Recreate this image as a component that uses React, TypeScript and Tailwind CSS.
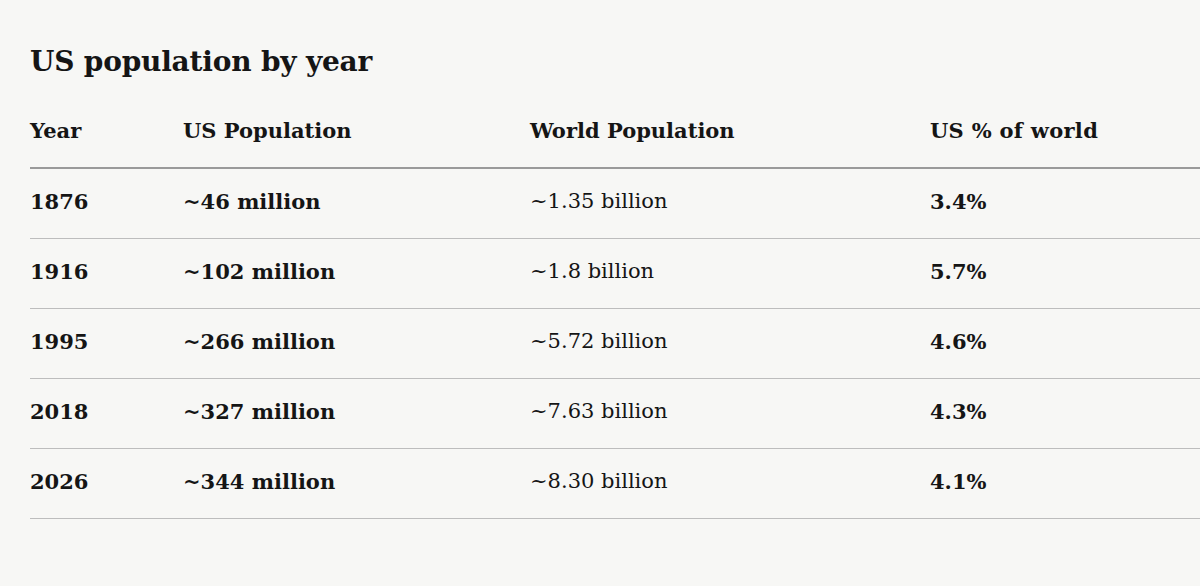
const rows = [
  { year: '1876', us: '~46 million', world: '~1.35 billion', pct: '3.4%' },
  { year: '1916', us: '~102 million', world: '~1.8 billion', pct: '5.7%' },
  { year: '1995', us: '~266 million', world: '~5.72 billion', pct: '4.6%' },
  { year: '2018', us: '~327 million', world: '~7.63 billion', pct: '4.3%' },
  { year: '2026', us: '~344 million', world: '~8.30 billion', pct: '4.1%' },
];

export default function App() {
  return (
    <div className="min-h-[586px] w-[1200px] overflow-hidden bg-[#f7f7f5] pl-[30px] pt-[42px] text-[#151515] font-['DejaVu_Serif',serif]">
      <h2 className="text-[28px] font-bold leading-[40px] tracking-[-0.2px]">US population by year</h2>
      <table className="mt-[10px] w-[1180px] border-collapse text-left text-[21px]">
        <thead>
          <tr className="h-[76px] border-b-2 border-[#9a9a9a]">
            <th className="w-[153px] p-0 pt-[2px] font-bold">Year</th>
            <th className="w-[347px] p-0 pt-[2px] font-bold">US Population</th>
            <th className="w-[400px] p-0 pt-[2px] font-bold">World Population</th>
            <th className="p-0 pt-[2px] font-bold tracking-[0.3px]">US % of world</th>
          </tr>
        </thead>
        <tbody>
          {rows.map(r => (
            <tr key={r.year} className="h-[70px] border-b-[1.5px] border-[#bdbdbd]">
              <td className="p-0 pb-[3px] font-bold">{r.year}</td>
              <td className="p-0 pb-[3px] font-bold">{r.us}</td>
              <td className="p-0 pb-[3px]">{r.world}</td>
              <td className="p-0 pb-[3px] font-bold">{r.pct}</td>
            </tr>
          ))}
        </tbody>
      </table>
    </div>
  );
}
